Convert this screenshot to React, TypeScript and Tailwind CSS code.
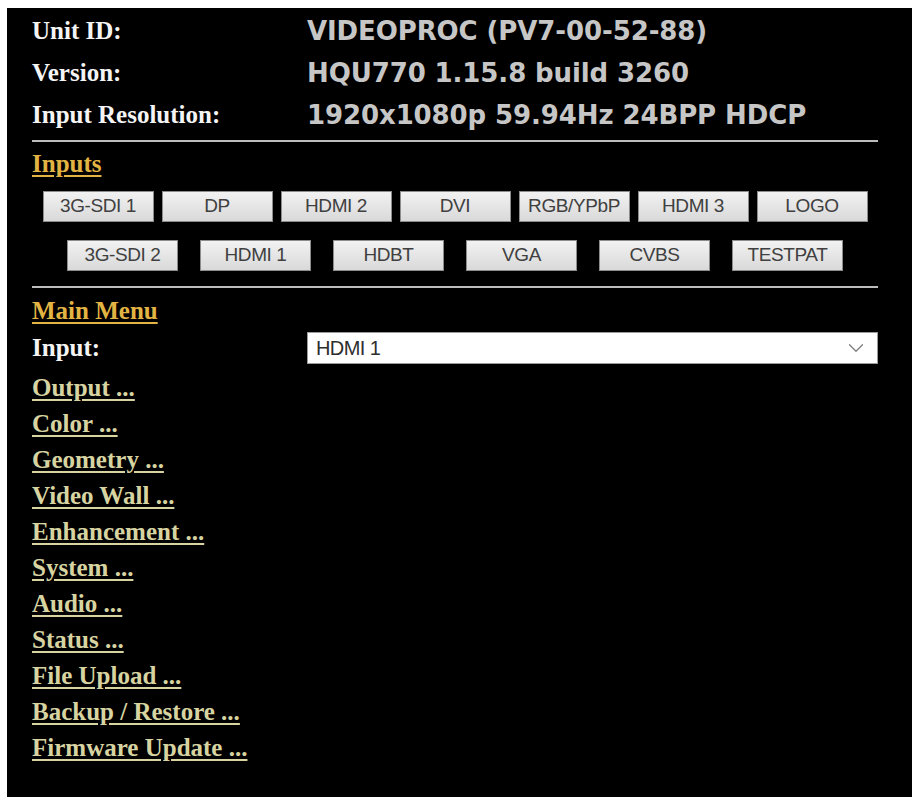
import { ChevronDown } from "lucide-react";

const serif = { fontFamily: '"Liberation Serif", "Times New Roman", serif' };

const infoRows = [
  { label: "Unit ID:", value: "VIDEOPROC (PV7-00-52-88)" },
  { label: "Version:", value: "HQU770 1.15.8 build 3260" },
  { label: "Input Resolution:", value: "1920x1080p 59.94Hz 24BPP HDCP" },
];

// the device page truncates the component input label to "RGB/YPbP"
const inputsTop = ["3G-SDI 1", "DP", "HDMI 2", "DVI", "RGB/YPbP", "HDMI 3", "LOGO"];
const inputsBottom = ["3G-SDI 2", "HDMI 1", "HDBT", "VGA", "CVBS", "TESTPAT"];

const menu = [
  "Output ...",
  "Color ...",
  "Geometry ...",
  "Video Wall ...",
  "Enhancement ...",
  "System ...",
  "Audio ...",
  "Status ...",
  "File Upload ...",
  "Backup / Restore ...",
  "Firmware Update ...",
];

function InputButton({ name }: { name: string }) {
  return (
    <button
      type="button"
      className="flex h-[31px] w-[111px] shrink-0 items-center justify-center whitespace-nowrap border border-[#8c8c8c] bg-gradient-to-b from-[#f2f2f2] to-[#d9d9d9] font-['Liberation_Sans',Arial,sans-serif] text-[19px] tracking-[-0.4px] text-[#404040]"
    >
      {name}
    </button>
  );
}

export default function App() {
  return (
    <div className="min-h-[799px] w-[915px] bg-white pl-[7px] pt-[8px]">
      <div className="flex h-[789px] w-[905px] flex-col bg-black pl-[25px] pr-[34px] pt-[2px]">
        {infoRows.map((r) => (
          <div key={r.label} className="flex h-[42px] items-center">
            <span style={serif} className="w-[275px] shrink-0 text-[25px] font-bold text-[#f4f4f4]">
              {r.label}
            </span>
            <span className="whitespace-nowrap font-['DejaVu_Sans',Verdana,sans-serif] text-[26px] font-bold tracking-[-0.1px] text-[#c6c6c6]">
              {r.value}
            </span>
          </div>
        ))}
        <div className="mt-[4px] h-[2px] bg-[#bdbdbd]" />

        <div className="mt-[8px] h-[28px] leading-[28px]">
          <a
            href="#"
            style={serif}
            className="text-[25px] font-bold text-[#e2b443] underline decoration-2 underline-offset-[3px]"
          >
            Inputs
          </a>
        </div>
        <div className="mt-[13px] flex justify-center gap-[8px]">
          {inputsTop.map((n) => (
            <InputButton key={n} name={n} />
          ))}
        </div>
        <div className="mt-[18px] flex justify-center gap-[22px]">
          {inputsBottom.map((n) => (
            <InputButton key={n} name={n} />
          ))}
        </div>
        <div className="mt-[15px] h-[2px] bg-[#bdbdbd]" />

        <div className="mt-[9px] h-[28px] leading-[28px]">
          <a
            href="#"
            style={serif}
            className="text-[25px] font-bold text-[#e2b443] underline decoration-2 underline-offset-[3px]"
          >
            Main Menu
          </a>
        </div>
        <div className="mt-[7px] flex h-[32px] items-center">
          <span style={serif} className="w-[275px] shrink-0 text-[25px] font-bold text-[#f4f4f4]">
            Input:
          </span>
          <div className="flex h-[32px] flex-1 items-center justify-between border border-[#9a9a9a] bg-white pl-[8px] pr-[8px]">
            <span className="font-['Liberation_Sans',Arial,sans-serif] text-[20px] tracking-[-0.6px] text-[#2e2e2e]">
              HDMI 1
            </span>
            <ChevronDown className="size-[26px] text-[#7a7a7a]" strokeWidth={1.1} />
          </div>
        </div>

        <ul className="mt-[6px] flex flex-col">
          {menu.map((m) => (
            <li key={m} className="h-[36px] leading-[36px]">
              <a
                href="#"
                style={serif}
                className="text-[25px] font-bold text-[#d7d4a2] underline decoration-2 underline-offset-[3px]"
              >
                {m}
              </a>
            </li>
          ))}
        </ul>
      </div>
    </div>
  );
}
